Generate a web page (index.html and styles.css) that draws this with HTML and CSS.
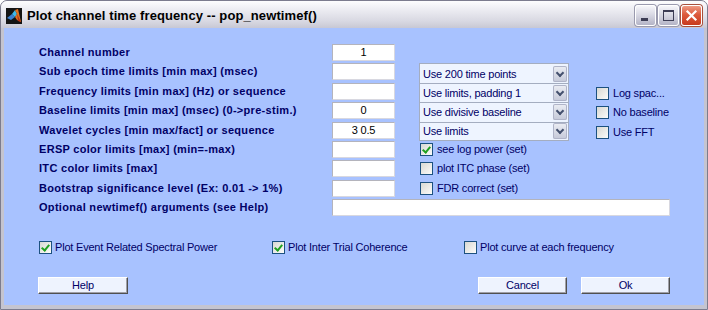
FILE: index.html
```html
<!doctype html>
<html lang="en">
    <head>
        <meta charset="UTF-8" />
        <title>Plot channel time frequency -- pop_newtimef()</title>
        <link rel="stylesheet" href="styles.css">
    </head>
    <body>
        <div class="window">
            <div class="titlebar">
                <svg class="app-icon" width="16" height="16" viewBox="0 0 16 16">
                    <rect width="16" height="16" fill="#141414" />
                    <polygon points="1,10 6,6 9,9 5,12" fill="#3a7fd0" />
                    <polygon points="6,6 9,2 11,6 9,9" fill="#40b8e8" />
                    <polygon points="9,2 12,1 15,14 11,12 9,9 11,6" fill="#e07020" />
                    <polygon points="11,6 15,14 12,13" fill="#b83010" />
                </svg>
                <span class="title">Plot channel time frequency -- pop_newtimef()</span>
                <div class="caption-buttons">
                    <span class="cap-btn"><span class="min-glyph"></span></span>
                    <span class="cap-btn"><span class="max-glyph"></span></span>
                    <span class="cap-btn close">
                        <svg width="19" height="19" viewBox="0 0 19 19">
                            <path d="M5.5 5.5 L13.5 13.5 M13.5 5.5 L5.5 13.5" stroke="#fff" stroke-width="2.2" stroke-linecap="square" />
                        </svg>
                    </span>
                </div>
            </div>

            <div class="client">
                <div class="form">
                    <div class="lbl">Channel number</div>
                    <div class="edit">1</div>

                    <div class="lbl">Sub epoch time limits [min max] (msec)</div>
                    <div class="edit"></div>
                    <div class="pop">Use 200 time points<span class="arrow"></span></div>

                    <div class="lbl">Frequency limits [min max] (Hz) or sequence</div>
                    <div class="edit"></div>
                    <div class="pop">Use limits, padding 1<span class="arrow"></span></div>
                    <div class="side"><span class="box"></span>Log spac...</div>

                    <div class="lbl">Baseline limits [min max] (msec) (0-&gt;pre-stim.)</div>
                    <div class="edit">0</div>
                    <div class="pop">Use divisive baseline<span class="arrow"></span></div>
                    <div class="side"><span class="box"></span>No baseline</div>

                    <div class="lbl">Wavelet cycles [min max/fact] or sequence</div>
                    <div class="edit">3 0.5</div>
                    <div class="pop last">Use limits<span class="arrow"></span></div>
                    <div class="side"><span class="box"></span>Use FFT</div>

                    <div class="lbl">ERSP color limits [max] (min=-max)</div>
                    <div class="edit"></div>
                    <div class="opt"><span class="box checked"></span>see log power (set)</div>

                    <div class="lbl">ITC color limits [max]</div>
                    <div class="edit"></div>
                    <div class="opt"><span class="box"></span>plot ITC phase (set)</div>

                    <div class="lbl">Bootstrap significance level (Ex: 0.01 -&gt; 1%)</div>
                    <div class="edit"></div>
                    <div class="opt"><span class="box"></span>FDR correct (set)</div>

                    <div class="lbl">Optional newtimef() arguments (see Help)</div>
                    <div class="edit wide"></div>
                </div>

                <div class="plot-checks">
                    <div class="check"><span class="box checked"></span>Plot Event Related Spectral Power</div>
                    <div class="check"><span class="box checked"></span>Plot Inter Trial Coherence</div>
                    <div class="check"><span class="box"></span>Plot curve at each frequency</div>
                </div>

                <div class="actions">
                    <button class="btn help">Help</button>
                    <button class="btn cancel">Cancel</button>
                    <button class="btn ok">Ok</button>
                </div>
            </div>
        </div>
    </body>
</html>
```

FILE: styles.css
```css
body {
    margin: 0;
    background-color: #fff;
    font-family: "Liberation Sans", Arial, sans-serif;
}
.window {
    width: 708px;
    height: 310px;
    box-sizing: border-box;
    display: flex;
    flex-direction: column;
    background-color: #c4c4d0;
    border: 1px solid #7c7c8e;
    border-radius: 7px 7px 0 0;
    overflow: hidden;
}
.titlebar {
    height: 27px;
    flex: none;
    display: flex;
    align-items: center;
    padding: 0 5px;
    background: linear-gradient(#fdfdfe, #ebebf1 35%, #d8d8e2 75%, #c8c8d4);
}
.app-icon {
    margin-top: 2px;
}
.title {
    margin-left: 5px;
    margin-top: 1px;
    font-size: 13px;
    font-weight: bold;
    letter-spacing: 0.1px;
    color: #000;
}
.caption-buttons {
    margin-left: auto;
    display: flex;
    gap: 2px;
    margin-top: 2px;
}
.cap-btn {
    width: 19px;
    height: 19px;
    position: relative;
    border: 1px solid #fff;
    border-radius: 3px;
    background: linear-gradient(#f6f6fa, #d6d6e2 50%, #b4b4c6);
    box-shadow: 0 0 0 1px #9a9aae;
}
.cap-btn.close {
    background: linear-gradient(#ee9a84, #dc5a3c 45%, #c83a1e);
    box-shadow: 0 0 0 1px #a8503c;
}
.min-glyph {
    position: absolute;
    left: 5px;
    top: 12px;
    width: 7px;
    height: 3px;
    background-color: #3c3c54;
}
.max-glyph {
    position: absolute;
    left: 4px;
    top: 4px;
    width: 9px;
    height: 8px;
    border: 1px solid #3c3c54;
    border-top-width: 2px;
}
.client {
    flex: 1;
    margin: 0 3px 4px;
    padding: 16px 0 0 35px;
    background-color: #a8c2ff;
    color: #000066;
    font-size: 11px;
    letter-spacing: -0.2px;
}
.form {
    display: grid;
    grid-template-columns: 293px 63px 24px 150px 27px 1fr;
    grid-auto-rows: 19.4px;
}
.lbl {
    grid-column: 1;
    font-weight: bold;
    letter-spacing: 0.3px;
    line-height: 16px;
    white-space: nowrap;
}
.edit {
    grid-column: 2;
    height: 17px;
    box-sizing: border-box;
    background-color: #fff;
    border: 1px solid #b4b4bc;
    border-right-color: #d8d8e0;
    border-bottom-color: #d8d8e0;
    color: #000;
    text-align: center;
    line-height: 15px;
}
.edit.wide {
    grid-column: 2 / 7;
    width: 338px;
}
.pop {
    grid-column: 4;
    display: flex;
    align-items: center;
    box-sizing: border-box;
    padding-left: 3px;
    background-color: #eef4ff;
    border: 1px solid #a4adc0;
    border-bottom: none;
}
.pop.last {
    border-bottom: 1px solid #a4adc0;
}
.arrow {
    margin-left: auto;
    width: 14px;
    height: 16px;
    margin-right: 1px;
    border-radius: 2px;
    background: linear-gradient(#eceef4, #c4c8d8);
    box-shadow: inset 0 0 0 1px #b0b4c8;
    position: relative;
}
.arrow::after {
    content: "";
    position: absolute;
    left: 4px;
    top: 4px;
    width: 4px;
    height: 4px;
    border-right: 2px solid #44506e;
    border-bottom: 2px solid #44506e;
    transform: rotate(45deg);
}
.opt,
.side {
    display: flex;
    align-items: center;
    gap: 4px;
    align-self: start;
    margin-top: 2px;
    line-height: 13px;
}
.opt {
    grid-column: 4;
    margin-left: 1px;
}
.side {
    grid-column: 6;
    margin-top: 4px;
}
.box {
    width: 13px;
    height: 13px;
    box-sizing: border-box;
    flex: none;
    border: 1px solid #1c5180;
    background: linear-gradient(135deg, #d8d8d2, #fcfcfa);
    position: relative;
}
.box.checked::after {
    content: "";
    position: absolute;
    left: 3px;
    top: 1px;
    width: 3px;
    height: 6px;
    border-right: 2px solid #21a121;
    border-bottom: 2px solid #21a121;
    transform: rotate(40deg);
}
.plot-checks {
    display: grid;
    grid-template-columns: 233px 192px 1fr;
    margin-top: 22px;
}
.check {
    display: flex;
    align-items: center;
    gap: 3px;
    line-height: 13px;
}
.actions {
    display: flex;
    gap: 13px;
    margin-top: 23px;
    margin-left: -1px;
}
.btn {
    width: 89px;
    height: 17px;
    padding: 0;
    font-family: inherit;
    font-size: 11px;
    letter-spacing: -0.2px;
    color: #000066;
    background-color: #eef3fe;
    border: 1px solid;
    border-color: #fff #505050 #505050 #fff;
    box-shadow: inset -1px -1px #a0a0a8;
}
.help {
    width: 90px;
}
.cancel {
    margin-left: auto;
    margin-right: 1px;
}
.ok {
    margin-right: 34px;
}
```
